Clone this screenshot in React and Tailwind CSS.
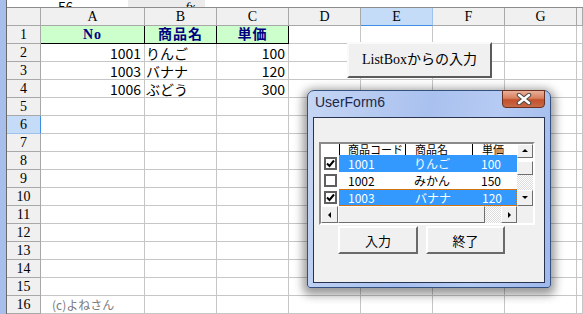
import React from 'react';

const JP = { fontFamily: '"Noto Sans CJK JP", sans-serif' };

const rows = {
  2: ['1001', 'りんご', '100'],
  3: ['1003', 'バナナ', '120'],
  4: ['1006', 'ぶどう', '300'],
};

function Sheet() {
  const letters = ['A', 'B', 'C', 'D', 'E', 'F', 'G', ''];
  const cells = [];

  cells.push(<div key="corner" className="bg-[#f0f0f0] border-r border-b border-[#a8a8a8]" />);
  letters.forEach((l) => {
    const sel = l === 'E';
    cells.push(
      <div
        key={'h' + l}
        className={`flex items-center justify-center border-r border-b leading-none font-['Liberation_Serif',serif] text-[14px] ${
          sel ? 'bg-[#c4dcf7] border-r-[#9cc2ee] border-b-[#3e8de4]' : 'bg-[#f0f0f0] border-[#a8a8a8]'
        }`}
      >
        {l}
      </div>
    );
  });

  for (let r = 1; r <= 16; r++) {
    const sel = r === 6;
    cells.push(
      <div
        key={'r' + r}
        className={`flex items-center justify-center border-r border-b leading-none font-['Liberation_Serif',serif] text-[14px] ${
          sel ? 'bg-[#c4dcf7] border-b-[#9cc2ee] border-r-[#3e8de4]' : 'bg-[#f0f0f0] border-[#a8a8a8]'
        }`}
      >
        {r}
      </div>
    );
    for (let c = 0; c < 8; c++) {
      let content = null;
      let cls = 'border-r border-b border-[#c6c6c6] bg-white';
      if (r === 1 && c < 3) {
        cls =
          "border-r border-b border-black bg-[#ccffcc] justify-center font-bold text-[#000080] font-['Liberation_Serif','Noto_Sans_CJK_JP',serif] tracking-[1px]";
        content = ['No', '商品名', '単価'][c];
      } else if (rows[r] && c < 3) {
        content = rows[r][c];
        cls += c === 1 ? ' justify-start pl-[1px]' : ' justify-end pr-[3px]';
      } else if (r === 16 && c === 0) {
        content = <span className="text-[12px] text-[#7a7a7a] pl-[11px]">(c)よねさん</span>;
      }
      cells.push(
        <div
          key={r + '-' + c}
          className={`flex items-center whitespace-nowrap overflow-hidden text-[14px] leading-none ${cls}`}
          style={r === 1 && c < 3 ? undefined : JP}
        >
          {content}
        </div>
      );
    }
  }

  return (
    <div className="grid grid-cols-[34px_104px_72px_72px_72px_72px_72px_72px_1fr] auto-rows-[18px] text-black">
      {cells}
    </div>
  );
}

function Arrow({ dir }) {
  const pts = {
    up: '1,5 4,2 7,5',
    down: '1,2 4,5 7,2',
    left: '5,1 2,4 5,7',
    right: '3,1 6,4 3,7',
  }[dir];
  return (
    <svg width="8" height="8" viewBox="0 0 8 8">
      <polygon points={pts} fill="black" />
    </svg>
  );
}

function SbBtn({ dir, className = '' }) {
  return (
    <div
      className={`flex items-center justify-center bg-[#f0f0f0] border border-t-white border-l-white border-b-[#6e6e6e] border-r-[#6e6e6e] ${className}`}
    >
      {dir && <Arrow dir={dir} />}
    </div>
  );
}

function Check({ on }) {
  return (
    <div className="w-[13px] h-[13px] border-2 border-[#5f5f5f] bg-white flex items-center justify-center">
      {on && (
        <svg width="9" height="9" viewBox="0 0 9 9">
          <path d="M1 4.5 L3.5 7 L8 1.5" stroke="black" strokeWidth="2" fill="none" />
        </svg>
      )}
    </div>
  );
}

function ListRow({ checked, selected, focus, vals }) {
  return (
    <div className="h-[17px] flex">
      <div className="w-[18px] flex items-center justify-center">
        <Check on={checked} />
      </div>
      <div
        className={`flex-1 flex items-center text-[12px] leading-none ${
          selected ? 'bg-[#3399ff] text-white' : 'text-black'
        } ${focus ? 'border border-dotted border-[#d07010]' : ''}`}
      >
        <span className={`w-[66px] ${focus ? 'pl-[8px]' : 'pl-[9px]'}`}>{vals[0]}</span>
        <span className="w-[67px] pl-[9px]">{vals[1]}</span>
        <span className="pl-[9px]">{vals[2]}</span>
      </div>
    </div>
  );
}

function ListBox() {
  return (
    <div className="ml-[5px] mt-[24px] w-[216px] h-[83px] border-2 border-t-[#8a8a8a] border-l-[#8a8a8a] border-b-white border-r-white bg-white flex">
      <div className="w-[196px] flex flex-col">
        <div className="h-[11px] flex text-[11px] leading-[11px] overflow-hidden whitespace-nowrap">
          <div className="w-[18px]" />
          <div className="w-[66px] border-l border-black pl-[8px]">商品コード</div>
          <div className="w-[67px] border-l border-black pl-[9px]">商品名</div>
          <div className="flex-1 border-l border-black pl-[9px]">単価</div>
        </div>
        <ListRow checked selected vals={['1001', 'りんご', '100']} />
        <ListRow vals={['1002', 'みかん', '150']} />
        <ListRow checked selected focus vals={['1003', 'バナナ', '120']} />
        <div className="h-[17px] flex">
          <SbBtn dir="left" className="w-[17px]" />
          <SbBtn className="w-[147px]" />
          <div className="flex-1 bg-[repeating-conic-gradient(#dcdcdc_0%_25%,#ffffff_0%_50%)] bg-[length:2px_2px]" />
          <SbBtn dir="right" className="w-[16px]" />
        </div>
      </div>
      <div className="w-[16px] flex flex-col">
        <SbBtn dir="up" className="h-[14px]" />
        <SbBtn className="h-[14px] mt-[3px]" />
        <div className="flex-1 bg-[repeating-conic-gradient(#dcdcdc_0%_25%,#ffffff_0%_50%)] bg-[length:2px_2px]" />
        <SbBtn dir="down" className="h-[16px]" />
        <div className="h-[17px] bg-[#f0f0f0]" />
      </div>
    </div>
  );
}

function FormButton({ children, className = '' }) {
  return (
    <div
      className={`h-[28px] flex items-center justify-center bg-[#f0f0f0] border-2 border-t-white border-l-white border-b-[#6a6a6a] border-r-[#6a6a6a] text-[13px] leading-none ${className}`}
    >
      {children}
    </div>
  );
}

function UserForm() {
  return (
    <div
      className="absolute left-[307px] top-[90px] w-[244px] h-[198px] rounded-t-[7px] rounded-b-[3px] border border-[#34507e] bg-[linear-gradient(100deg,#c6d6f4_0%,#a9c1ef_45%,#b6cbf3_70%,#9fb9ec_100%)] shadow-[0_3px_10px_4px_rgba(0,0,0,0.4)] flex flex-col px-[5px] pb-[4px]"
      style={JP}
    >
      <div className="h-[26px] flex justify-between">
        <span className="pl-[2px] pt-[4px] text-[14px] leading-none text-[#1c2848] font-['Liberation_Sans',sans-serif]">UserForm6</span>
        <div className="-mt-[1px] w-[43px] h-[18px] rounded-b-[4px] border border-[#6a3020] bg-[linear-gradient(180deg,#eab09a_0%,#d8805e_45%,#c4502c_55%,#c86a48_100%)] flex items-center justify-center">
          <svg width="16" height="12" viewBox="0 0 16 12">
            <path d="M3 2 L13 10 M13 2 L3 10" stroke="#4a4a4a" strokeWidth="4.5" strokeLinecap="round" />
            <path d="M3 2 L13 10 M13 2 L3 10" stroke="white" strokeWidth="2.5" strokeLinecap="round" />
          </svg>
        </div>
      </div>
      <div className="flex-1 border border-[#27334f] bg-[#f0f0f0] flex flex-col">
        <ListBox />
        <div className="flex gap-[8px] ml-[24px] mt-[1px]">
          <FormButton className="w-[80px]">入力</FormButton>
          <FormButton className="w-[79px]">終了</FormButton>
        </div>
      </div>
    </div>
  );
}

export default function App() {
  return (
    <div className="relative w-[583px] h-[314px] overflow-hidden bg-white flex">
      <div className="w-[7px] bg-[#a7bfea] border-r border-[#6a6a6a]" />
      <div className="flex-1 flex flex-col">
        <div className="h-[8px] border-b border-[#8c8c8c] flex items-end overflow-hidden text-[13px] leading-[14px]" style={JP}>
          <span className="ml-[51px] w-[70px] -mb-[7px]">E6</span>
          <div className="w-[77px] h-full bg-[#ececec] flex justify-end pr-[10px] items-end">
            <span className="italic font-['Liberation_Serif',serif] -mb-[7px]">fx</span>
          </div>
        </div>
        <Sheet />
      </div>
      <div className="absolute left-[347px] top-[42px] w-[145px] h-[36px] bg-[#f0f0f0] border-2 border-t-[#fafafa] border-l-[#fafafa] border-b-[#5a5a5a] border-r-[#5a5a5a] flex items-center justify-center text-[14px] leading-none font-['Liberation_Serif','Noto_Sans_CJK_JP',serif]">
        ListBoxからの入力
      </div>
      <UserForm />
    </div>
  );
}
